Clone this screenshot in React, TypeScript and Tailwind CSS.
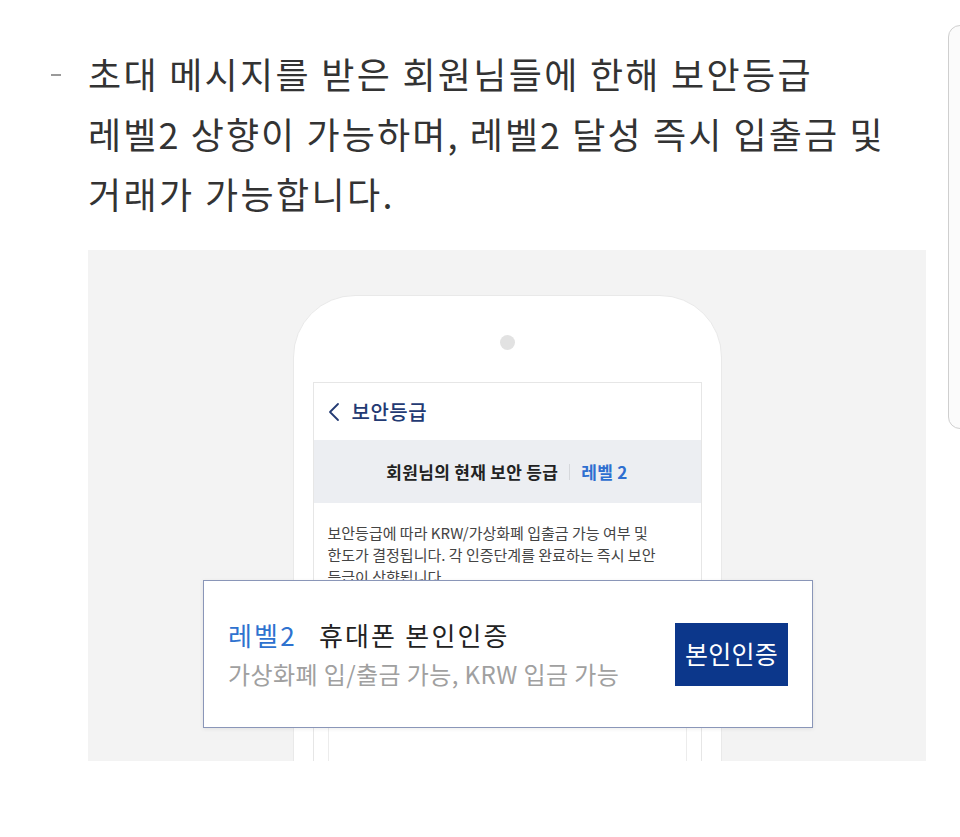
import React from "react";

const KR = "font-['Noto_Sans_CJK_KR','Noto_Sans',sans-serif]";

export default function App() {
  return (
    <div className={`relative w-[960px] h-[837px] bg-white overflow-hidden ${KR}`}>
      {/* right edge panel */}
      <div className="absolute left-[948px] top-[25px] w-[20px] h-[404px] rounded-l-[12px] border border-[#cfcfcf] bg-[#fbfbfb]" />

      {/* text block */}
      <div className="flex pt-[43px]">
        <div className="w-[88px] flex justify-start pl-[51px] pt-[31px]">
          <div className="w-[10px] h-[2px] bg-[#9a9a9a]" />
        </div>
        <div className="text-[36px] leading-[60px] text-[#333333]">
          <div className="tracking-[2.3px]">초대 메시지를 받은 회원님들에 한해 보안등급</div>
          <div className="tracking-[2.1px]">레벨2 상향이 가능하며, 레벨2 달성 즉시 입출금 및</div>
          <div className="tracking-[2.4px]">거래가 가능합니다.</div>
        </div>
      </div>

      {/* illustration box */}
      <div className="relative ml-[88px] mt-[27px] w-[838px] h-[511px] bg-[#f3f3f3]">
        <div className="absolute inset-0 overflow-hidden flex justify-center">
          {/* phone */}
          <div className="mt-[45px] w-[429px] h-[520px] shrink-0 rounded-t-[62px] bg-white border border-[#e9e9e9] flex flex-col items-center">
            <div className="mt-[39px] w-[15px] h-[15px] rounded-full bg-[#e2e2e2]" />
            {/* screen */}
            <div className="mt-[32px] w-[389px] flex-1 border border-[#e6e6e6] flex flex-col">
              <div className="h-[57px] flex items-center pl-[14px] gap-[12px] text-[#233a73]">
                <svg width="12" height="20" viewBox="0 0 12 20" fill="none">
                  <path d="M10 2 L2 10 L10 18" stroke="#233a73" strokeWidth="1.8" strokeLinecap="round" strokeLinejoin="round" />
                </svg>
                <span className="text-[20px] font-medium tracking-[0.5px]">보안등급</span>
              </div>
              <div className="h-[63px] bg-[#eceef2] flex items-center justify-center gap-[11px] text-[17px] font-bold tracking-[0.3px]">
                <span className="text-[#222222]">회원님의 현재 보안 등급</span>
                <span className="w-px h-[16px] bg-[#d6d8dc]" />
                <span className="text-[#2e6fd0]">레벨 2</span>
              </div>
              <div className="px-[14px] pt-[19px] text-[15px] leading-[22px] text-[#444444] tracking-[0px]">
                보안등급에 따라 KRW/가상화폐 입출금 가능 여부 및
                <br />
                한도가 결정됩니다. 각 인증단계를 완료하는 즉시 보안
                <br />
                등급이 상향됩니다.
              </div>
              <div className="mx-[14px] mt-[10px] flex-1 border-x border-[#ececec]" />
            </div>
          </div>
        </div>

        {/* card */}
        <div className="absolute left-[115px] top-[330px] w-[610px] h-[148px] bg-white border border-[#8a96b8] shadow-[0_1px_4px_rgba(0,0,0,0.08)] flex items-center pl-[24px] pr-[24px]">
          <div className="flex-1 flex flex-col gap-[6px]">
            <div className="flex items-center text-[26px] leading-[34px] tracking-[2.2px]">
              <span className="text-[#2e72cf]">레벨2</span>
              <span className="ml-[22px] text-[#222222]">휴대폰 본인인증</span>
            </div>
            <div className="text-[24px] leading-[32px] text-[#a0a0a0] tracking-[0.4px]">가상화폐 입/출금 가능, KRW 입금 가능</div>
          </div>
          <div className="w-[113px] h-[63px] bg-[#0c378b] flex items-center justify-center text-white text-[25px] tracking-[0.3px]">
            본인인증
          </div>
        </div>
      </div>
    </div>
  );
}
